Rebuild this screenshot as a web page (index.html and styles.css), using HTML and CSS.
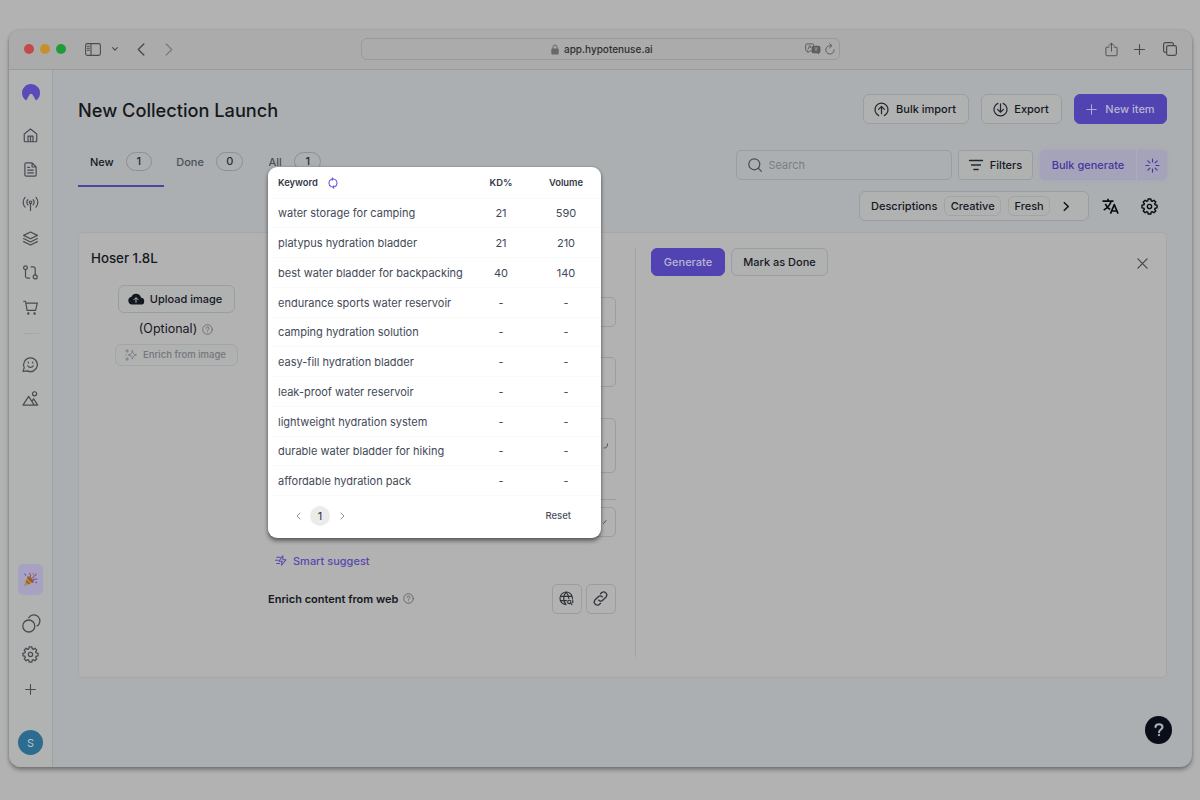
FILE: index.html
```html
<!DOCTYPE html>
<html lang="en">
<head>
<meta charset="utf-8">
<title>New Collection Launch</title>
<link rel="stylesheet" href="styles.css">
</head>
<body>
<svg class="defs" aria-hidden="true">
  <symbol id="help" viewBox="0 0 24 24"><circle cx="12" cy="12" r="10.500"/><path d="M9 9.300a3 3 0 0 1 6 .2c0 2.200-3 2.500-3 4.500M12 17.400v.2"/></symbol>
  <symbol id="cog" viewBox="0 0 24 24"><circle cx="12" cy="12" r="3"/><path d="M19.840 9.600 22.640 10.120V13.880L19.840 14.400 19.240 15.850 20.850 18.190 18.190 20.850 15.850 19.240 14.400 19.840 13.880 22.640H10.120L9.600 19.840 8.150 19.240 5.810 20.850 3.150 18.190 4.760 15.850 4.160 14.400 1.360 13.880V10.120L4.160 9.600 4.760 8.150 3.150 5.810 5.810 3.150 8.150 4.760 9.600 4.160 10.120 1.360H13.880L14.400 4.160 15.850 4.760 18.190 3.150 20.850 5.810 19.240 8.150z"/></symbol>
</svg>
<div class="window">
  <header class="titlebar">
    <div class="lights"><i class="red"></i><i class="amber"></i><i class="green"></i></div>
    <div class="nav-tools">
      <svg class="side-toggle" viewBox="0 0 16 13"><rect x=".6" y=".6" width="14.800" height="11.800" rx="1.800"/><path d="M6 .6v11.800M2.300 3.200h2M2.300 5.200h2M2.300 7.200h2"/></svg>
      <svg class="tiny-chev" viewBox="0 0 6 4"><path d="M.6.7 3 3.200 5.400.7"/></svg>
      <svg class="nav-chev back" viewBox="0 0 8 13"><path d="M6.800 1 1.300 6.500l5.500 5.500"/></svg>
      <svg class="nav-chev fwd" viewBox="0 0 8 13"><path d="m1.200 1 5.500 5.500L1.200 12"/></svg>
    </div>
    <div class="address">
      <svg class="lock" viewBox="0 0 8 11"><path class="solid" d="M1.200 4.600h5.600a.9.9 0 0 1 .9.900v4a.9.9 0 0 1-.9.900H1.200a.9.9 0 0 1-.9-.9v-4a.9.9 0 0 1 .9-.9z"/><path d="M2 4.800V3a2 2 0 0 1 4 0v1.800"/></svg>
      <span>app.hypotenuse.ai</span>
      <div class="address-end">
        <svg class="translate-mini" viewBox="0 0 16 12"><path d="M6 8H4.500L2.800 9.600V8H2a1.300 1.300 0 0 1-1.300-1.300V2.200A1.300 1.300 0 0 1 2 .9h5.500a1.300 1.300 0 0 1 1.300 1.300M3.200 5.900l1.500-3.400 1 2.200"/><rect class="solid" x="6.600" y="2.800" width="8.800" height="7.400" rx="1.800"/><path class="solid" d="M12 9.500h2v2.200z"/><path class="cut" d="M9.500 5h3M9.800 8.200 12.300 5M10.300 6.200l2.200 2"/></svg>
        <svg class="reload" viewBox="0 0 10 12"><path d="M9.200 6.800A4.200 4.200 0 1 1 6.200 2.800M4.700.6l2.200 2.200-2.200 2"/></svg>
      </div>
    </div>
    <div class="right-tools">
      <svg viewBox="0 0 14 16" class="share"><path d="M4.200 5.500H1.800a.8.800 0 0 0-.8.800v7.600c0 .5.4.8.8.800h10.400c.5 0 .8-.3.800-.8V6.300a.8.800 0 0 0-.8-.8H9.800M7 9.800V1.300M4.300 3.800 7 1.100l2.700 2.700"/></svg>
      <svg viewBox="0 0 12 12" class="plus"><path d="M6 .5v11M.5 6h11"/></svg>
      <svg viewBox="0 0 14 14" class="tabs-icon"><rect x="3.600" y="3.600" width="9.800" height="9.800" rx="1.800"/><path d="M3.400 10.400H2.300A1.700 1.700 0 0 1 .6 8.700V2.300A1.700 1.700 0 0 1 2.300.6h6.400a1.700 1.700 0 0 1 1.700 1.700v1.100"/></svg>
    </div>
  </header>
  <div class="app">
    <aside class="sidebar">
      <svg class="logo" viewBox="0 0 18 18"><path d="M4.200 16.600A9 9 0 1 1 14 16.500L10.600 10.700a1.800 1.800 0 0 0-3.100 0z"/></svg>
      <nav class="menu">
        <a><svg viewBox="0 0 24 24"><path d="M2 9.500 12 1.500l10 8V20a2 2 0 0 1-2 2H4a2 2 0 0 1-2-2zM8 22V13h8v9M12 13v9"/></svg></a>
        <a><svg viewBox="0 0 24 24"><path d="M14.500 1.500H5a2 2 0 0 0-2 2v17a2 2 0 0 0 2 2h14a2 2 0 0 0 2-2V8zM14.500 1.500V8H21M7.500 8.500h3M7.500 13h9M7.500 17.500h9"/></svg></a>
        <a><svg viewBox="0 0 24 24"><circle cx="12" cy="10" r="2"/><path d="M12 12v11M7.800 14a5.600 5.600 0 0 1 0-8M16.200 6a5.600 5.600 0 0 1 0 8M3.300 17.800a11.500 11.500 0 0 1 0-15.600M20.700 2.200a11.500 11.500 0 0 1 0 15.600"/></svg></a>
        <a><svg viewBox="0 0 24 24"><path d="m12 1.500 11 5.500-11 5.500L1 7zM1 12l11 5.500L23 12M1 17l11 5.500L23 17"/></svg></a>
        <a><svg viewBox="0 0 24 24"><circle cx="4" cy="4.500" r="3"/><circle cx="19.500" cy="19" r="3.200"/><path d="M4 7.500V18a3 3 0 0 0 3 3h3.500M19.500 15.800V6a3 3 0 0 0-3-3H13"/></svg></a>
        <a><svg viewBox="0 0 24 24"><path d="M1 2h3l2.500 14.500H20L23 5H4.500"/><circle class="solid" cx="8.500" cy="21.500" r="1.900"/><circle class="solid" cx="18.500" cy="21.500" r="1.900"/></svg></a>
      </nav>
      <hr>
      <nav class="menu menu-two">
        <a><svg viewBox="0 0 24 24"><path d="M0 23 2 17A11 11 0 1 1 7 22.200z"/><path d="M7.500 14c2 3.500 7 3.500 9 0M8.500 8.300v1.200M15.500 8.300v1.200"/></svg></a>
        <a><svg viewBox="0 0 24 24"><path d="m0 22.500 9-14 9 14zM15 15.500l2-3L23.500 22.500H18"/><circle cx="18.500" cy="4.500" r="3.300"/></svg></a>
      </nav>
      <div class="party"><svg viewBox="0 0 16 16"><path fill="#b9893a" d="M4.800 4.800 1 15l10.200-3.700z"/><path fill="#8a6130" d="m3.600 8.500 4 4-1.800.6-2.900-3z"/><ellipse cx="8" cy="8" rx="1.700" ry="4.500" transform="rotate(-45 8 8)" fill="#946026"/><path class="s1" d="M7.800 5.300C8.600 4 8.400 2.800 7 1.500"/><path class="s2" d="M11 8.700c1-1.300 2.200-1.600 3.800-1"/><path class="s3" d="m10 6 1.300-.4.500-1.500 1.500-.4.800-1.700"/><path class="s4" d="M2 2.300l.9 1M13.500 11l1 .5M10.900 1.600v.4"/></svg></div>
      <svg class="coins" viewBox="0 0 18 18"><circle cx="6.800" cy="11" r="6"/><path d="M6.800 2.700A6 6 0 1 1 15 11"/></svg>
      <svg class="side-gear"><use href="#cog"/></svg>
      <svg class="side-plus" viewBox="0 0 12 12"><path d="M6 .7v10.600M.7 6h10.600"/></svg>
      <div class="avatar">S</div>
    </aside>
    <main>
      <div class="head">
        <h1>New Collection Launch</h1>
        <div class="actions">
          <button class="btn import"><svg viewBox="0 0 16 16"><path d="M5 14.500a7 7 0 1 1 6 0M8 12.500V5M4.900 7.800 8 4.700l3.100 3.100"/></svg>Bulk import</button>
          <button class="btn export"><svg viewBox="0 0 16 16"><path d="M5.200 1.500a7 7 0 1 0 5.600 0M8 2v8.500M4.900 7.800 8 10.900l3.100-3.100"/></svg>Export</button>
          <button class="btn primary new-item"><svg viewBox="0 0 12 12"><path d="M6 .8v10.400M.8 6h10.400"/></svg>New item</button>
        </div>
      </div>
      <div class="toolbar">
        <div class="tabs">
          <div class="tab active">New<b>1</b></div><div class="tab">Done<b>0</b></div><div class="tab">All<b>1</b></div>
        </div>
        <div class="filters">
          <div class="search"><svg viewBox="0 0 14 14"><circle cx="6.300" cy="6.300" r="5.500"/><path d="m10.400 10.400 3 3"/></svg>Search</div>
          <button class="btn filter"><svg viewBox="0 0 14 12"><path d="M.5 1.500h13M2.500 6h9M4.800 10.500h4.400"/></svg>Filters</button>
          <div class="bulk"><span>Bulk generate</span><svg viewBox="0 0 16 16"><path d="M8 1v3.200M8 11.800V15M1 8h3.200M11.800 8H15M3 3l2.300 2.300M10.700 10.700 13 13M3 13l2.300-2.300M10.700 5.300 13 3"/></svg></div>
        </div>
      </div>
      <div class="options">
        <div class="preset"><span>Descriptions</span><em>Creative</em><em>Fresh</em><svg viewBox="0 0 8 12"><path d="m1.500 1.700 4.500 4.300-4.500 4.300"/></svg></div>
        <svg class="translate" viewBox="0 0 18 18"><path d="M.5 3.300h11.700M6.300.8v2.500M9.700 3.300C8.600 7.500 5.500 10.600 1.800 12.700M3.500 6.200c1.200 2.800 3 4.700 5.200 6M9 16.500l4-9.500 4 9.500M10.300 13.700h5.400"/></svg>
        <svg class="opt-gear"><use href="#cog"/></svg>
      </div>
      <section class="card">
        <div class="item">
          <div class="media">
            <h2>Hoser 1.8L</h2>
            <button class="btn upload"><svg viewBox="0 0 16 12"><path class="solid" d="M13 4.800A5 5 0 0 0 3.500 3.700 4 4 0 0 0 4 11.600h8.600a3.400 3.400 0 0 0 .4-6.800z"/><path class="cut" d="M8 9.300V5.200M6 6.600l2-2 2 2"/></svg>Upload image</button>
            <p class="optional">(Optional)<svg><use href="#help"/></svg></p>
            <button class="btn enrich"><svg viewBox="0 0 13 13"><path d="M8 2c.5 2.800 1.500 4 4.500 4.500C9.500 7 8.500 8.200 8 11c-.5-2.800-1.500-4-4.500-4.500C6.500 6 7.500 4.800 8 2zM2.300.6v3M.8 2.100h3M2.300 9.400v3M.8 10.900h3M1 6.500h.4"/></svg>Enrich from image</button>
          </div>
          <div class="form">
            <div class="field f1"></div><div class="field f2"></div>
            <div class="field f3"><svg viewBox="0 0 8 8"><path d="M3 6c2.500 0 3.500-1 3.500-4"/></svg></div>
            <div class="rule"></div>
            <div class="field f4"><svg viewBox="0 0 8 8"><path d="m2.500 5.500 2.500-3"/></svg></div>
            <div class="suggest"><svg viewBox="0 0 13 12"><path d="m8.500.8-4.300 6h3.500L7 11.200l5-6H8.500zM1.800 2.500h4M.5 5.700h2.600M1.800 9.200h3.200"/></svg>Smart suggest</div>
            <div class="web"><span>Enrich content from web</span><svg class="q"><use href="#help"/></svg>
              <div class="web-btns">
                <button class="square"><svg viewBox="0 0 16 16"><path d="M7.500 14.500a6.700 6.700 0 1 1 6.900-6M1.800 5.700h12M1.800 10.200H8M7.500 14.500c-3.300-4-3.300-9 0-13.200 2.200 2.200 2.900 4.300 2.900 6.700"/><circle cx="11" cy="11.700" r="1.800"/><path d="m12.500 13.200 1.300 1.300M14.700 10v2.500"/></svg></button>
                <button class="square"><svg viewBox="0 0 24 24"><path d="M9 14.500a5 5 0 0 0 7 0l5-5a5 5 0 0 0-7-7L12 4.500M15 9.500a5 5 0 0 0-7 0l-5 5a5 5 0 0 0 7 7l2-2"/></svg></button>
              </div>
            </div>
          </div>
        </div>
        <div class="result">
          <button class="btn primary generate">Generate</button><button class="btn done">Mark as Done</button>
          <svg class="close" viewBox="0 0 12 12"><path d="m1 1 10 10M11 1 1 11"/></svg>
        </div>
      </section>
    </main>
  </div>
</div>
<div class="help-fab"><svg viewBox="0 0 14 18"><path d="M2.500 5.300c0-5 9-5 9 0 0 3-4.400 3.100-4.400 6.500"/><circle cx="7" cy="15.500" r="1.500"/></svg></div>
<div class="keywords">
  <div class="row thead"><span>Keyword<svg viewBox="0 0 12 12"><path d="M4 10.400A4.800 4.800 0 0 1 4 1.600L6 1.200M8 1.600a4.800 4.800 0 0 1 0 8.800L6 10.800M5-.2l1.400 1.400L5 2.600M7 9.400l-1.400 1.400L7 12.200"/></svg></span><span>KD%</span><span>Volume</span></div>
  <div class="row"><span>water storage for camping</span><span>21</span><span>590</span></div>
  <div class="row"><span>platypus hydration bladder</span><span>21</span><span>210</span></div>
  <div class="row"><span>best water bladder for backpacking</span><span>40</span><span>140</span></div>
  <div class="row"><span>endurance sports water reservoir</span><span>-</span><span>-</span></div>
  <div class="row"><span>camping hydration solution</span><span>-</span><span>-</span></div>
  <div class="row"><span>easy-fill hydration bladder</span><span>-</span><span>-</span></div>
  <div class="row"><span>leak-proof water reservoir</span><span>-</span><span>-</span></div>
  <div class="row"><span>lightweight hydration system</span><span>-</span><span>-</span></div>
  <div class="row"><span>durable water bladder for hiking</span><span>-</span><span>-</span></div>
  <div class="row"><span>affordable hydration pack</span><span>-</span><span>-</span></div>
  <div class="pager">
    <svg viewBox="0 0 5 8"><path d="M4 1 1 4l3 3"/></svg><b>1</b><svg viewBox="0 0 5 8"><path d="m1 1 3 3-3 3"/></svg>
    <span>Reset</span>
  </div>
</div>
</body>
</html>
```
FILE: styles.css
```css
* { box-sizing: border-box; }
body { margin: 0; width: 1200px; height: 800px; overflow: hidden; padding: 30px 8px 0 9px; background: #b2b2b2; font-family: Inter, "Liberation Sans", sans-serif; font-size: 11px; color: #15181f; position: relative; }
svg { fill: none; stroke: currentColor; stroke-linecap: round; stroke-linejoin: round; flex: none; overflow: visible; }
.defs { position: absolute; width: 0; height: 0; }
.solid { fill: currentColor; stroke: none; }
.cut { stroke: #b2b2b2; }
button { font: inherit; color: inherit; }
h1, h2, p { margin: 0; font-weight: 500; }

.window { height: 737px; border-radius: 10px 10px 12px 12px; background: #acafb1; box-shadow: 0 3px 4px rgba(0,0,0,.32), 0 0 2px rgba(0,0,0,.2); display: flex; flex-direction: column; overflow: hidden; }
.titlebar { height: 40px; flex: none; background: #ababab; border-bottom: 1px solid #999a9c; display: flex; align-items: center; padding: 0 15px 1px 15px; color: #4b4b4c; }
.lights { display: flex; gap: 6px; width: 61px; }
.lights i { width: 10px; height: 10px; border-radius: 50%; }
.red { background: #c44a48; } .amber { background: #c8902c; } .green { background: #1f9c39; }
.nav-tools { display: flex; align-items: center; width: 276px; }
.side-toggle { width: 16px; height: 13px; stroke-width: 1.100; }
.tiny-chev { width: 6px; height: 4px; margin-left: 11px; stroke-width: 1.100; }
.nav-chev { width: 8px; height: 13px; stroke-width: 1.400; }
.back { margin-left: 19px; } .fwd { margin-left: 20px; color: #7e7e7f; }
.address { width: 479px; height: 22px; border: 1px solid #999; border-radius: 6px; display: flex; align-items: center; padding-left: 189px; font-size: 10px; font-weight: 500; color: #303031; }
.lock { width: 8px; height: 11px; margin-right: 5px; color: #686868; }
.address-end { margin-left: auto; display: flex; align-items: center; gap: 4px; padding-right: 4px; color: #5c5c5d; }
.translate-mini { width: 16px; height: 12px; } .translate-mini .cut { stroke-width: .8; stroke: #999; }
.reload { width: 10px; height: 12px; }
.right-tools { margin-left: auto; display: flex; align-items: center; }
.share { width: 13px; height: 15px; margin-right: 16px; }
.plus { width: 11px; height: 11px; margin-right: 18px; stroke-width: 1.200; }
.tabs-icon { width: 14px; height: 14px; stroke-width: 1.200; }

.app { display: flex; flex: 1; }
.sidebar { width: 44px; flex: none; border-right: 1px solid #9fa2a4; background: #b1b2b2; display: flex; flex-direction: column; align-items: center; color: #474b52; padding-top: 14px; }
.logo { width: 18px; height: 18px; fill: #5a4bb8; stroke: none; color: #5a4bb8; }
.menu { display: flex; flex-direction: column; margin-top: 16px; }
.menu a { height: 34.400px; display: flex; align-items: center; }
.menu svg { width: 15px; height: 15px; stroke-width: 1.900; }
.sidebar hr { width: 16px; margin: 9px 0 0; border: 0; border-top: 1px solid #a5a6a6; }
.menu-two { margin-top: 13px; }
.party { width: 25px; height: 31px; margin-top: 148px; border-radius: 5px; background: #a7a1c2; display: flex; align-items: center; justify-content: center; }
.party svg { width: 15px; height: 15px; stroke-width: 1.100; stroke: none; }
.party .s1 { stroke: #a74773; } .party .s2 { stroke: #6f4fb0; } .party .s3 { stroke: #a35275; } .party .s4 { stroke: #3f69a3; }
.coins { width: 18px; height: 18px; margin-top: 20px; stroke-width: 1.300; }
.side-gear { width: 17px; height: 17px; margin-top: 13px; stroke-width: 1.800; }
.side-plus { width: 11px; height: 11px; margin-top: 21px; stroke-width: 1.200; }
.avatar { width: 25px; height: 25px; margin-top: 35px; border-radius: 50%; background: #2c6c8e; color: #b8c6ce; display: flex; align-items: center; justify-content: center; font-size: 11px; }

main { flex: 1; padding: 24px 25px 0 25px; }
.head, .toolbar { display: flex; justify-content: space-between; }
h1 { font-size: 18.200px; line-height: 30px; height: 30px; padding-top: .5px; color: #16181c; }
.actions { display: flex; }
.btn { height: 30px; border: 1px solid #9b9da0; border-radius: 6px; background: #b0b1b1; display: flex; align-items: center; justify-content: center; padding: 0; font-size: 11px; font-weight: 500; }
.btn svg { color: #24282e; }
.import { width: 106px; gap: 7px; padding-right: 2px; margin-right: 12px; } .export { width: 81px; gap: 6px; padding-right: 1px; margin-right: 12px; }
.import svg, .export svg { width: 15px; height: 15px; stroke-width: 1.300; }
.primary { background: #5143b1; border-color: #5143b1; color: #b9b6d0; }
.new-item { width: 93px; gap: 8px; } .btn.new-item svg { width: 11px; height: 11px; color: #b9b6d0; }
.toolbar { margin-top: 26px; height: 37px; }
.tabs { display: flex; }
.tab { height: 37px; display: flex; padding: 2px 12.500px 0; font-weight: 500; color: #4b4f55; line-height: 20px; border-bottom: 2px solid transparent; }
.tab b { width: 27px; height: 19px; margin-left: 12.500px; border: 1px solid #8e9194; border-radius: 10px; text-align: center; line-height: 17px; font-weight: 500; color: #2a2d32; }
.tab.active { color: #15181f; border-bottom-color: #4d43a0; padding: 2px 12px 0; }
.tab.active b { width: 26px; margin-left: 12px; }
.filters { display: flex; }
.search { width: 216px; height: 30px; border: 1px solid #9b9da0; border-radius: 5px; padding-left: 11px; display: flex; align-items: center; gap: 6.500px; color: #7b7e82; }
.search svg { width: 14px; height: 14px; color: #474b50; stroke-width: 1.200; }
.filter { width: 75px; margin-left: 6px; gap: 7px; border-radius: 4px; } .filter svg { width: 14px; height: 12px; stroke-width: 1.300; }
.bulk { margin-left: 7px; width: 127px; height: 30px; border-radius: 5px; background: #a5a3b9; color: #4435a2; display: flex; align-items: center; font-weight: 500; box-shadow: 0 0 5px #a5a3b9; }
.bulk span { width: 97px; height: 30px; border-right: 1px solid #acacba; text-align: center; line-height: 30px; }
.bulk svg { width: 15px; height: 15px; margin-left: 7.500px; stroke-width: 1.200; }
.options { margin-top: 4px; height: 30px; display: flex; justify-content: flex-end; align-items: center; }
.preset { width: 230px; height: 30px; border: 1px solid #9b9da0; border-radius: 6px; background: #b0b1b1; display: flex; align-items: center; padding-left: 11px; font-weight: 500; }
.preset em { font-style: normal; height: 20px; line-height: 18px; padding: 0 5.500px; border: 1px solid #a2a4a6; border-radius: 6px; margin-left: 6.800px; }
.preset svg { width: 7px; height: 11px; margin-left: 13px; stroke-width: 1.900; }
.translate { width: 17px; height: 17px; margin-left: 13px; stroke-width: 1.700; stroke-linecap: butt; color: #090b0e; }
.opt-gear { width: 17px; height: 17px; margin: 0 9px 0 22px; stroke-width: 2; color: #090b0e; }

.card { margin-top: 11px; height: 446px; border: 1px solid #a5a8a9; border-radius: 5px; background: #b2b2b2; display: flex; padding: 15px 0 20px; }
.item { width: 557px; border-right: 1px solid #a2a3a3; display: flex; }
.media { width: 189px; padding-left: 12px; display: flex; flex-direction: column; align-items: center; flex: none; padding-right: 16px; }
h2 { align-self: flex-start; font-size: 13.300px; line-height: 20px; }
.upload { width: 117px; height: 28px; margin-top: 17px; margin-left: 9px; gap: 6px; padding: 0 2px 1px 0; } .upload svg { width: 16px; height: 12px; color: #13171f; }
.optional { display: flex; align-items: center; gap: 5px; height: 20px; margin-top: 5px; margin-left: 9px; font-size: 12.500px; font-weight: 400; }
.optional svg { width: 11px; height: 11px; color: #65686b; stroke-width: 1.800; margin-top: 3px; }
.enrich { width: 123px; height: 22px; margin-top: 6px; margin-left: 9px; gap: 6px; font-size: 9.500px; color: #75777a; border-color: #a3a5a6; padding: 0 1px 1px 0; }
.enrich svg { width: 12px; height: 12px; color: #75777a; stroke-width: .9; }
.form { width: 348px; display: flex; flex-direction: column; }
.field { border: 1px solid #9b9da0; border-radius: 5px; height: 30px; flex: none; color: #4e5155; display: flex; justify-content: flex-end; align-items: center; padding-right: 6px; }
.field svg { width: 8px; height: 8px; }
.f1 { margin-top: 49px; } .f2 { margin-top: 30px; } .f3 { margin-top: 31px; height: 55px; } .f4 { margin-top: 7px; }
.rule { height: 1px; background: #9b9da0; margin-top: 26px; flex: none; }
.suggest { margin: 14px 0 0 7px; height: 19px; display: flex; align-items: center; gap: 6px; color: #5648ad; font-weight: 500; }
.suggest svg { width: 12px; height: 11px; stroke-width: 1.100; }
.web { margin-top: 14px; height: 30px; display: flex; align-items: center; font-weight: 600; }
.q { width: 11px; height: 11px; margin-left: 5px; margin-bottom: 1px; stroke-width: 1.800; color: #5b5e62; }
.web-btns { margin-left: auto; display: flex; gap: 4px; }
.square { width: 30px; height: 30px; border: 1px solid #9b9da0; border-radius: 5px; background: none; padding: 0 1px 1px 0; display: flex; align-items: center; justify-content: center; color: #303439; }
.square svg { width: 15px; height: 15px; stroke-width: 1.200; } .square:last-child svg { stroke-width: 2; }
.result { flex: 1; display: flex; padding: 0 18.500px 0 15px; }
.generate { width: 74px; height: 28px; } .done { width: 97px; height: 28px; margin-left: 6px; }
.close { width: 11px; height: 11px; margin: 10px 0 0 auto; color: #45484c; stroke-width: 1.400; }

.help-fab { position: absolute; left: 1145px; top: 716px; width: 27px; height: 28px; border-radius: 50%; background: #090e18; color: #aeb2b6; display: flex; align-items: center; justify-content: center; }
.help-fab svg { width: 12px; height: 14px; stroke-width: 2.700; } .help-fab circle { fill: currentColor; stroke: none; }

.keywords { position: absolute; left: 268px; top: 167px; width: 333px; height: 371px; background: #fff; border-radius: 9px; box-shadow: 0 3px 4px rgba(0,0,0,.45), 0 0 3px rgba(0,0,0,.2); padding: 1px 0 0 4px; color: #434957; }
.row { height: 29.750px; display: grid; grid-template-columns: 196px 66px 64px; align-items: center; border-bottom: 1px solid #fafafa; padding-top: 1px; line-height: 16px; }
.row span:first-child { padding-left: 6px; display: flex; align-items: center; white-space: nowrap; }
.row span:not(:first-child) { text-align: center; }
.thead { font-size: 9.400px; font-weight: 600; color: #343949; height: 30.500px; padding-top: 0; }
.thead svg { width: 10px; height: 10px; margin-left: 10px; color: #6c57df; stroke-width: 1.300; }
.pager { display: flex; align-items: center; height: 39.500px; padding-left: 24px; color: #8c8f95; }
.pager svg { width: 5px; height: 8px; }
.pager b { width: 20px; height: 20px; border-radius: 50%; background: #ebebeb; margin: 0 10px 0 9px; color: #303030; text-align: center; line-height: 20px; font-weight: 400; }
.pager span { margin-left: auto; margin-right: 30px; font-size: 9.500px; font-weight: 500; color: #4a505c; }
```
